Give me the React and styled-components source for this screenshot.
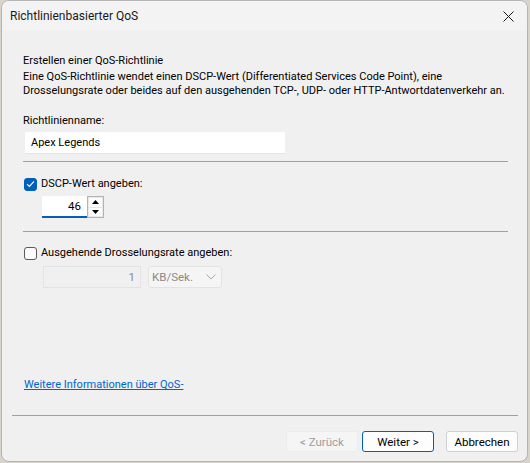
import React from "react";
import styled, { createGlobalStyle } from "styled-components";

const GlobalStyle = createGlobalStyle`
  html, body {
    margin: 0;
    padding: 0;
    background: #d8d4cc;
  }
  body {
    font-family: Roboto, "Liberation Sans", sans-serif;
    font-size: 11px;
    color: #000;
  }
`;

const Window = styled.div`
  width: 527px;
  height: 462px;
  margin-left: 1px;
  box-sizing: border-box;
  border: 1px solid #b4b4b4;
  border-radius: 8px;
  background: #f0f0f0;
  overflow: hidden;
  display: flex;
  flex-direction: column;
`;

const TitleBar = styled.div`
  height: 30px;
  background: #f3f3f3;
  display: flex;
  align-items: center;
  justify-content: space-between;
  padding-left: 8px;
`;

const Title = styled.span`
  font-size: 12px;
  color: #1a1a1a;
`;

const CloseButton = styled.div`
  width: 38px;
  height: 30px;
  display: flex;
  align-items: center;
  justify-content: center;
`;

const Body = styled.div`
  flex: 1;
  display: flex;
  flex-direction: column;
  padding: 22px 19px 0 21px;
`;

const Heading = styled.div`
  line-height: 16px;
`;

const Description = styled.div`
  margin-top: 1px;
  line-height: 14px;
  white-space: nowrap;
`;

const FieldLabel = styled.div`
  margin-top: 15px;
  line-height: 16px;
`;

const TextInput = styled.div`
  margin-top: 3px;
  margin-left: 2px;
  width: 260px;
  height: 22px;
  background: #fff;
  box-sizing: border-box;
  padding-left: 6px;
  display: flex;
  align-items: center;
  border-bottom: 1px solid #e4e4e4;
`;

const Separator = styled.div`
  height: 1px;
  background: #a0a0a0;
  margin: ${(p) => p.$margin || "0"};
`;

const CheckRow = styled.label`
  display: flex;
  align-items: center;
  gap: 4px;
  line-height: 16px;
  margin-left: 1px;
`;

const Box = styled.span`
  width: 13px;
  height: 13px;
  box-sizing: border-box;
  border-radius: 3px;
  display: flex;
  align-items: center;
  justify-content: center;
  border: 1px solid ${(p) => (p.$checked ? "#005fb8" : "#5a5a5a")};
  background: ${(p) => (p.$checked ? "#005fb8" : "#fbfbfb")};
`;

const Indented = styled.div`
  display: flex;
  align-items: stretch;
  gap: ${(p) => p.$gap || 0}px;
  margin-left: ${(p) => p.$indent}px;
  margin-top: ${(p) => p.$top}px;
`;

const SpinField = styled.div`
  width: 45px;
  height: 22px;
  box-sizing: border-box;
  background: #fff;
  border-bottom: 2px solid #005fb8;
  display: flex;
  align-items: center;
  justify-content: flex-end;
  padding-right: 6px;
  font-size: 11.5px;
`;

const SpinButtons = styled.div`
  width: 17px;
  height: 22px;
  box-sizing: border-box;
  border: 1px solid #b4b4b4;
  display: flex;
  flex-direction: column;
  gap: 1px;
  padding: 1px;
  background: #e8e8e8;
`;

const SpinButton = styled.div`
  flex: 1;
  background: #fdfdfd;
  display: flex;
  align-items: center;
  justify-content: center;
`;

const DisabledField = styled.div`
  width: ${(p) => p.$width}px;
  height: 22px;
  box-sizing: border-box;
  background: ${(p) => (p.$plain ? "#f5f5f5" : "#f0f0f0")};
  border: 1px solid #e3e3e3;
  color: #8a8a8a;
  display: flex;
  align-items: center;
  justify-content: ${(p) => (p.$right ? "flex-end" : "space-between")};
  padding: 0 5px 0 3px;
  border-radius: ${(p) => (p.$plain ? "3px" : "0")};
  font-size: 11.5px;
`;

const Spacer = styled.div`
  flex: 1;
`;

const Link = styled.a`
  color: #0066cc;
  text-decoration: underline;
  line-height: 16px;
  margin-bottom: 22px;
  margin-left: 1px;
  align-self: flex-start;
  cursor: pointer;
`;

const Footer = styled.div`
  padding: 0 9px 9px 10px;
  display: flex;
  flex-direction: column;
`;

const ButtonRow = styled.div`
  display: flex;
  justify-content: flex-end;
  margin-top: 15px;
`;

const Button = styled.button`
  width: 72px;
  height: 21px;
  box-sizing: border-box;
  font-family: inherit;
  font-size: 11.5px;
  border-radius: 3px;
  margin-left: ${(p) => p.$gap || 0}px;
  background: ${(p) => (p.disabled ? "#f5f5f5" : "#fdfdfd")};
  color: ${(p) => (p.disabled ? "#9d9d9d" : "#000")};
  border: 1px solid
    ${(p) => (p.$primary ? "#005fb8" : p.disabled ? "#ececec" : "#d0d0d0")};
  padding: 0;
  display: flex;
  align-items: center;
  justify-content: center;
`;

const Check = () => (
  <svg width="9" height="8" viewBox="0 0 9 8">
    <path d="M1 4.2 L3.4 6.4 L8 1.4" fill="none" stroke="#fff" strokeWidth="1.1" />
  </svg>
);

const Arrow = ({ up }) => (
  <svg width="7" height="4" viewBox="0 0 7 4">
    <path d={up ? "M0 4 L3.5 0 L7 4 Z" : "M0 0 L3.5 4 L7 0 Z"} fill="#000" />
  </svg>
);

export default function App() {
  return (
    <>
      <GlobalStyle />
      <Window>
        <TitleBar>
          <Title>Richtlinienbasierter QoS</Title>
          <CloseButton>
            <svg width="11" height="11" viewBox="0 0 11 11">
              <path d="M0.5 0.5 L10.5 10.5 M10.5 0.5 L0.5 10.5" stroke="#1a1a1a" strokeWidth="1" />
            </svg>
          </CloseButton>
        </TitleBar>
        <Body>
          <Heading>Erstellen einer QoS-Richtlinie</Heading>
          <Description>
            Eine QoS-Richtlinie wendet einen DSCP-Wert (Differentiated Services Code Point), eine
            <br />
            Drosselungsrate oder beides auf den ausgehenden TCP-, UDP- oder HTTP-Antwortdatenverkehr an.
          </Description>
          <FieldLabel>Richtlinienname:</FieldLabel>
          <TextInput>Apex Legends</TextInput>
          <Separator $margin="7px 0 14px 0" />
          <CheckRow>
            <Box $checked>
              <Check />
            </Box>
            DSCP-Wert angeben:
          </CheckRow>
          <Indented $indent={19} $top={4}>
            <SpinField>46</SpinField>
            <SpinButtons>
              <SpinButton>
                <Arrow up />
              </SpinButton>
              <SpinButton>
                <Arrow />
              </SpinButton>
            </SpinButtons>
          </Indented>
          <Separator $margin="13px 0 13px 0" />
          <CheckRow>
            <Box />
            Ausgehende Drosselungsrate angeben:
          </CheckRow>
          <Indented $indent={20} $top={5} $gap={7}>
            <DisabledField $width={98} $right>
              1
            </DisabledField>
            <DisabledField $width={74} $plain>
              KB/Sek.
              <svg width="10" height="6" viewBox="0 0 10 6">
                <path d="M0.5 0.5 L5 5 L9.5 0.5" fill="none" stroke="#a8a8a8" strokeWidth="1" />
              </svg>
            </DisabledField>
          </Indented>
          <Spacer />
          <Link>Weitere Informationen über QoS-</Link>
        </Body>
        <Footer>
          <Separator />
          <ButtonRow>
            <Button disabled>&lt; Zurück</Button>
            <Button $primary $gap={4}>
              Weiter &gt;
            </Button>
            <Button $gap={12}>Abbrechen</Button>
          </ButtonRow>
        </Footer>
      </Window>
    </>
  );
}
